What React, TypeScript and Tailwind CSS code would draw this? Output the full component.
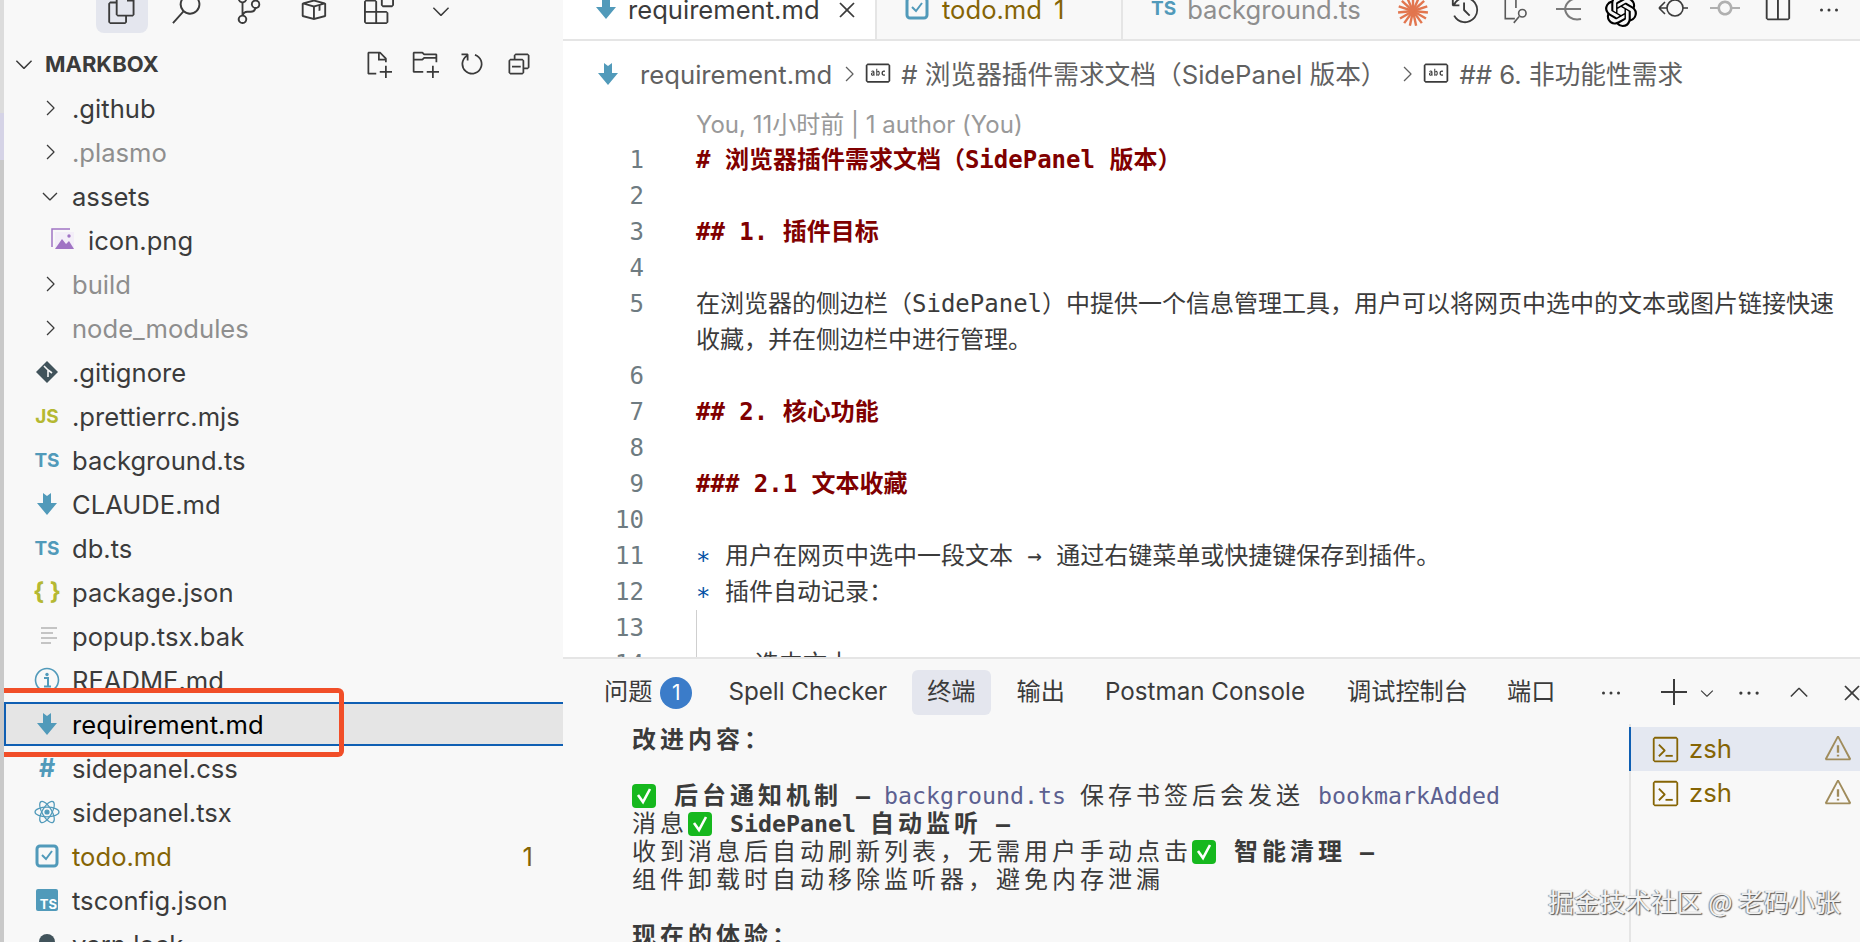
import type { ReactNode } from 'react';
import { SiOpenai } from 'react-icons/si';
import {
    VscAdd, VscChevronDown, VscChevronRight, VscChevronUp, VscClose, VscCollapseAll, VscEllipsis, VscExtensions, VscFiles,
    VscGitCommit, VscHistory, VscNewFile, VscNewFolder, VscPackage, VscRefresh, VscSearch, VscSourceControl,
    VscSplitHorizontal, VscSymbolString, VscTerminal, VscWarning,
} from 'react-icons/vsc';

const MdIcon = ({ size = 24 }: { size?: number }): JSX.Element => (
    <svg width={size} height={size} viewBox="0 0 24 24" fill="#519aba">
        <path d="M8 1 L12 4 L16 1 V11 H22 L12 23 L2 11 H8 Z" />
    </svg>
);

const GitIcon = (): JSX.Element => (
    <svg width="24" height="24" viewBox="0 0 24 24">
        <path d="M12 1 L23 12 L12 23 L1 12 Z" fill="#41535b" />
        <path d="M9 6 L13 10 V17 M13 10 L17 13" stroke="#f8f8f8" strokeWidth="1.6" fill="none" />
    </svg>
);

const ImageIcon = (): JSX.Element => (
    <svg width="26" height="26" viewBox="0 0 26 26" fill="none">
        <path d="M2 20 V2 H20" stroke="#a074c4" strokeWidth="1.5" />
        <rect x="5" y="5" width="19" height="17" fill="#f3eef8" />
        <path d="M5 22 L12 12 L16 17 L19 14 L24 22 Z" fill="#a074c4" />
        <circle cx="19" cy="9" r="1.7" fill="#a074c4" />
    </svg>
);

const LinesIcon = (): JSX.Element => (
    <svg width="24" height="24" viewBox="0 0 24 24" stroke="#c4c4c4" strokeWidth="2">
        <path d="M6 4 H22 M6 9 H18 M6 14 H22 M6 19 H16" />
    </svg>
);

const InfoIcon = (): JSX.Element => (
    <svg width="26" height="26" viewBox="0 0 26 26" fill="none">
        <circle cx="13" cy="13" r="11.5" stroke="#519aba" strokeWidth="1.6" />
        <circle cx="13" cy="7.5" r="1.7" fill="#519aba" />
        <path d="M10 11 H14 V19 M10 19.5 H17" stroke="#519aba" strokeWidth="2" />
    </svg>
);

const AtomIcon = (): JSX.Element => (
    <svg width="26" height="26" viewBox="0 0 26 26" fill="none" stroke="#519aba" strokeWidth="1.2">
        <ellipse cx="13" cy="13" rx="12" ry="4.8" />
        <ellipse cx="13" cy="13" rx="12" ry="4.8" transform="rotate(60 13 13)" />
        <ellipse cx="13" cy="13" rx="12" ry="4.8" transform="rotate(120 13 13)" />
        <circle cx="13" cy="13" r="2" fill="#519aba" />
    </svg>
);

const TodoIcon = ({ size = 24 }: { size?: number }): JSX.Element => (
    <svg width={size} height={size} viewBox="0 0 24 24" fill="none">
        <rect x="2" y="2" width="20" height="20" rx="3" stroke="#519aba" strokeWidth="3" />
        <path d="M7 11 L11 15 L17 7" stroke="#519aba" strokeWidth="2" />
    </svg>
);

const TsText = ({ cls = '' }: { cls?: string }): JSX.Element => (
    <span className={`font-bold text-[19px] leading-none text-[#519aba] ${cls}`}>TS</span>
);

const Check = (): JSX.Element => (
    <svg width="24" height="26" viewBox="0 0 24 26" className="inline-block align-[-5px] mr-1">
        <rect x="0" y="1" width="24" height="24" rx="4" fill="#16b81e" />
        <path d="M6 12 L11 19 L18 6" stroke="#fff" strokeWidth="2.6" fill="none" />
    </svg>
);

type Row = { name: string; icon?: ReactNode; kind?: 'open' | 'closed'; dim?: boolean; indent?: boolean; cls?: string; badge?: string; active?: boolean };

const rows: Row[] = [
    { name: '.github', kind: 'closed' },
    { name: '.plasmo', kind: 'closed', dim: true },
    { name: 'assets', kind: 'open' },
    { name: 'icon.png', icon: <ImageIcon />, indent: true },
    { name: 'build', kind: 'closed', dim: true },
    { name: 'node_modules', kind: 'closed', dim: true },
    { name: '.gitignore', icon: <GitIcon /> },
    { name: '.prettierrc.mjs', icon: <span className="font-bold text-[19px] leading-none text-[#b5b832]">JS</span> },
    { name: 'background.ts', icon: <TsText /> },
    { name: 'CLAUDE.md', icon: <MdIcon /> },
    { name: 'db.ts', icon: <TsText /> },
    { name: 'package.json', icon: <span className="font-bold text-[24px] leading-none text-[#b5b832]">{'{ }'}</span> },
    { name: 'popup.tsx.bak', icon: <LinesIcon /> },
    { name: 'README.md', icon: <InfoIcon /> },
    { name: 'requirement.md', icon: <MdIcon />, active: true },
    { name: 'sidepanel.css', icon: <span className="font-bold text-[25px] leading-none text-[#519aba]">#</span> },
    { name: 'sidepanel.tsx', icon: <AtomIcon /> },
    { name: 'todo.md', icon: <TodoIcon />, cls: 'text-[#856404]', badge: '1' },
    { name: 'tsconfig.json', icon: <span className="flex w-[22px] h-[22px] items-end justify-end bg-[#519aba] rounded-[2px] pr-px text-[13px] font-bold leading-[14px] text-white">TS</span> },
    { name: 'yarn.lock', icon: <span className="block w-[16px] h-[20px] rounded-full bg-[#41535b]" /> },
];

const FileRow = ({ row }: { row: Row }): JSX.Element => (
    <div className={`relative flex h-[44px] shrink-0 items-center text-[25.6px] ${row.indent ? 'pl-[44px]' : 'pl-[28px]'} ${row.active ? 'border-2 border-r-0 border-[#0f5fb3] bg-[#e5e5e5] text-black' : ''} ${row.dim ? 'text-[#8e8e8e]' : row.active ? '' : 'text-[#3b3b3b]'} ${row.cls ?? ''}`}>
        <span className={`flex w-[30px] shrink-0 items-center justify-center ${row.active ? '-ml-[2px]' : ''}`}>
            {row.kind === 'closed' && <VscChevronRight size={26} className="ml-[6px] text-[#3b3b3b]" />}
            {row.kind === 'open' && <VscChevronDown size={26} className="ml-[6px] text-[#3b3b3b]" />}
            {row.icon}
        </span>
        <span className="ml-[10px] pt-[2px]">{row.name}</span>
        {row.badge && <span className="ml-auto mr-[30px] pt-[2px]">{row.badge}</span>}
        {row.active && <div className="absolute -left-[6px] -top-[16px] -bottom-[13px] w-[344px] border-[5px] border-l-0 border-[#f14e28] rounded-r-md" />}
    </div>
);

const Sidebar = (): JSX.Element => (
    <aside className="flex w-[559px] shrink-0 flex-col overflow-hidden bg-[#f8f8f8]">
        <div className="flex h-[33px] shrink-0 items-start pl-[92px] text-[#3b3b3b]">
            <span className="flex h-[33px] w-[52px] items-start justify-center rounded-b-lg bg-[#e4e6ee]"><VscFiles size={30} className="-mt-[6px]" /></span>
            <span className="ml-[12px] w-[52px]"><VscSearch size={30} className="-mt-[6px] ml-[11px]" /></span>
            <span className="w-[64px]"><VscSourceControl size={30} className="-mt-[6px] ml-[22px]" /></span>
            <span className="w-[66px]"><VscPackage size={30} className="-mt-[6px] ml-[22px]" /></span>
            <span className="w-[64px]"><VscExtensions size={30} className="-mt-[6px] ml-[22px]" /></span>
            <span className="w-[64px]"><VscChevronDown size={26} className="-mt-[2px] ml-[22px]" /></span>
        </div>
        <div className="flex h-[53px] shrink-0 items-center pt-[9px] text-[#3b3b3b]">
            <VscChevronDown size={26} className="ml-[7px]" />
            <span className="ml-[8px] text-[22px] font-bold">MARKBOX</span>
            <div className="ml-auto mr-[30px] flex gap-[19px]">
                <VscNewFile size={28} />
                <VscNewFolder size={28} />
                <VscRefresh size={28} />
                <VscCollapseAll size={28} />
            </div>
        </div>
        {rows.map((row) => <FileRow key={row.name} row={row} />)}
    </aside>
);

const Claude = (): JSX.Element => (
    <svg width="34" height="34" viewBox="0 0 34 34" stroke="#e2764f" strokeWidth="2.4">
        {[0, 24, 48, 72, 96, 120, 144, 168, 192, 216, 240, 264, 288, 312, 336].map((a) => (
            <line key={a} x1="17" y1="17" x2="17" y2="2" transform={`rotate(${a} 17 17)`} />
        ))}
    </svg>
);

const TabBar = (): JSX.Element => (
    <div className="flex h-[41px] shrink-0 overflow-hidden border-b-2 border-[#e5e5e5] bg-[#f8f8f8] text-[25.6px]">
        <div className="-mb-[2px] flex w-[312px] items-start bg-white pl-[31px] text-[#3b3b3b] z-10">
            <span className="-mt-[4px]"><MdIcon /></span>
            <span className="ml-[10px] -mt-[9px]">requirement.md</span>
            <VscClose size={28} className="ml-[13px] -mt-[4px]" />
        </div>
        <div className="flex w-[246px] items-start border-l-2 border-[#e5e5e5] pl-[28px] text-[#856404]">
            <span className="-mt-[4px]"><TodoIcon /></span>
            <span className="ml-[13px] -mt-[9px]">todo.md</span>
            <span className="ml-[12px] -mt-[9px]">1</span>
        </div>
        <div className="flex flex-1 items-start border-l-2 border-[#e5e5e5] pl-[28px] text-[#8e8e8e]">
            <TsText cls="-mt-[1px]" />
            <span className="ml-[11px] -mt-[9px]">background.ts</span>
        </div>
        <div className="flex items-start pr-[5px] text-[#3b3b3b]">
            <span className="flex w-[52px] justify-center -mt-[6px]"><Claude /></span>
            <span className="flex w-[52px] justify-center -mt-[5px]"><VscHistory size={30} /></span>
            <span className="flex w-[52px] justify-center -mt-[7px]">
                <svg width="32" height="32" viewBox="0 0 30 30" fill="none" stroke="#5a5a5a" strokeWidth="1.5"><path d="M13 24 H4 V2 H14 V14" /><circle cx="20" cy="19" r="3.5" /><path d="M17 22 L12 28" /></svg>
            </span>
            <span className="flex w-[52px] justify-center -mt-[5px]">
                <svg width="30" height="30" viewBox="0 0 30 30" fill="none" stroke="#7a7a7a" strokeWidth="2"><path d="M27 4 C18 2 12 7 11 14 C12 21 18 26 27 24 M2 14 H27 M2 14 L7 14" /></svg>
            </span>
            <span className="flex w-[52px] justify-center -mt-[5px] text-black"><SiOpenai size={32} /></span>
            <span className="flex w-[52px] justify-center mt-[-4px]">
                <svg width="32" height="28" viewBox="0 0 32 28" fill="none" stroke="#3b3b3b" strokeWidth="1.6"><circle cx="18" cy="12" r="8" /><path d="M2 12 H10 M2 12 L8 6 M2 12 L8 18 M26 12 H31" /></svg>
            </span>
            <span className="flex w-[52px] justify-center -mt-[7px] text-[#b0b0b0]"><VscGitCommit size={30} className="rotate-90" /></span>
            <span className="flex w-[52px] justify-center -mt-[6px] text-[#3b3b3b]"><VscSplitHorizontal size={30} /></span>
            <span className="flex w-[52px] justify-center -mt-[2px]"><VscEllipsis size={24} /></span>
        </div>
    </div>
);

const Breadcrumb = (): JSX.Element => (
    <div className="flex h-[66px] shrink-0 items-center pl-[33px] text-[25.7px] text-[#616161]">
        <MdIcon />
        <span className="ml-[20px] pt-[2px]">requirement.md</span>
        <VscChevronRight size={24} className="ml-[5px]" />
        <VscSymbolString size={28} className="ml-[3px] text-[#3b3b3b]" />
        <span className="ml-[9px] pt-[2px]"># 浏览器插件需求文档（SidePanel 版本）</span>
        <VscChevronRight size={24} className="ml-[8px]" />
        <VscSymbolString size={28} className="ml-[3px] text-[#3b3b3b]" />
        <span className="ml-[10px] pt-[2px]">## 6. 非功能性需求</span>
    </div>
);

const H = ({ children }: { children: ReactNode }): JSX.Element => <span className="font-bold text-[#800000]">{children}</span>;
const Star = (): JSX.Element => <span className="text-[#0451a5]">∗</span>;

const codeLines: { n?: number; body?: ReactNode }[] = [
    { n: 1, body: <H># 浏览器插件需求文档（SidePanel 版本）</H> },
    { n: 2 },
    { n: 3, body: <H>## 1. 插件目标</H> },
    { n: 4 },
    { n: 5, body: '在浏览器的侧边栏（SidePanel）中提供一个信息管理工具，用户可以将网页中选中的文本或图片链接快速' },
    { body: '收藏，并在侧边栏中进行管理。' },
    { n: 6 },
    { n: 7, body: <H>## 2. 核心功能</H> },
    { n: 8 },
    { n: 9, body: <H>### 2.1 文本收藏</H> },
    { n: 10 },
    { n: 11, body: <><Star /> 用户在网页中选中一段文本 → 通过右键菜单或快捷键保存到插件。</> },
    { n: 12, body: <><Star /> 插件自动记录：</> },
    { n: 13, body: <span className="block h-[36px] border-l border-[#cfcfcf]" /> },
    { n: 14, body: <span className="block h-[36px] border-l border-[#cfcfcf] pl-[58px]">选中文本</span> },
];

const Editor = (): JSX.Element => (
    <div className="h-[550px] shrink-0 overflow-hidden bg-white">
        <div className="h-[35px] whitespace-nowrap pl-[133px] text-[24px] leading-[35px] text-[#999999]">You, 11小时前 | 1 author (You)</div>
        <div className="font-['DejaVu_Sans_Mono','Noto_Sans_CJK_SC',monospace] text-[24px] leading-[36px] text-[#3b3b3b]">
            {codeLines.map((line, i) => (
                <div key={i} className="flex h-[36px]">
                    <span className="w-[81px] shrink-0 text-right text-[#6e7b81]">{line.n}</span>
                    <span className="ml-[52px] flex-1 whitespace-pre">{line.body}</span>
                </div>
            ))}
        </div>
    </div>
);

const Z = ({ children, b }: { children: ReactNode; b?: boolean }): JSX.Element => (
    <span className={`font-['Noto_Sans_CJK_SC',sans-serif] text-[24px] tracking-[4px] ${b ? 'font-bold' : ''}`}>{children}</span>
);
const L = ({ children, b, link }: { children: ReactNode; b?: boolean; link?: boolean }): JSX.Element => (
    <span className={`text-[23.25px] ${b ? 'font-bold' : ''} ${link ? 'text-[#5c6090]' : ''}`}>{children}</span>
);

const tabCls = 'shrink-0 whitespace-nowrap text-[24.2px] text-[#3b3b3b]';

const Panel = (): JSX.Element => (
    <div className="relative flex flex-1 flex-col overflow-hidden border-t-2 border-[#e5e5e5] bg-[#f8f8f8]">
        <div className="flex h-[65px] shrink-0 items-center pt-[2px] pl-[41px]">
            <span className={tabCls}>问题</span>
            <span className="ml-[8px] flex h-[32px] w-[32px] shrink-0 items-center justify-center rounded-full bg-[#3b7cc9] text-[21px] text-white">1</span>
            <span className={`${tabCls} ml-[36px]`}>Spell Checker</span>
            <span className={`${tabCls} ml-[25px] rounded-md bg-[#e4e6ee] px-[15px] py-[4px]`}>终端</span>
            <span className={`${tabCls} ml-[26px]`}>输出</span>
            <span className={`${tabCls} ml-[40px]`}>Postman Console</span>
            <span className={`${tabCls} ml-[42px]`}>调试控制台</span>
            <span className={`${tabCls} ml-[39px]`}>端口</span>
            <VscEllipsis size={24} className="ml-[44px] shrink-0 text-[#3b3b3b]" />
            <VscAdd size={32} className="ml-[36px] shrink-0 text-[#3b3b3b]" />
            <VscChevronDown size={20} className="ml-[6px] shrink-0 text-[#3b3b3b]" />
            <VscEllipsis size={26} className="ml-[19px] shrink-0 text-[#3b3b3b]" />
            <VscChevronUp size={28} className="ml-[23px] shrink-0 text-[#3b3b3b]" />
            <VscClose size={28} className="ml-[25px] shrink-0 text-[#3b3b3b]" />
        </div>
        <div className="flex flex-1 overflow-hidden">
            <div className="flex-1 whitespace-pre pl-[69px] font-['DejaVu_Sans_Mono','Noto_Sans_CJK_SC',monospace] leading-[28px] text-[#3b3b3b]">
                <div className="h-[28px]"><Z b>改进内容：</Z></div>
                <div className="h-[28px]" />
                <div className="h-[28px]"><Check /><L> </L><Z b>后台通知机制</Z><L b> – </L><L link>background.ts</L><L> </L><Z>保存书签后会发送</Z><L> </L><L link>bookmarkAdded</L></div>
                <div className="h-[28px]"><Z>消息</Z><Check /><L> </L><L b>SidePanel </L><Z b>自动监听</Z><L b> –</L></div>
                <div className="h-[28px]"><Z>收到消息后自动刷新列表，无需用户手动点击</Z><Check /><L> </L><Z b>智能清理</Z><L b> –</L></div>
                <div className="h-[28px]"><Z>组件卸载时自动移除监听器，避免内存泄漏</Z></div>
                <div className="h-[28px]" />
                <div className="h-[28px]"><Z b>现在的体验：</Z></div>
            </div>
            <div className="w-[231px] shrink-0 border-l-2 border-[#e5e5e5] pt-[3px] text-[25.6px] text-[#856404]">
                {[true, false].map((sel, i) => (
                    <div key={i} className={`-ml-[2px] flex h-[44px] items-center ${sel ? 'border-l-2 border-[#0f5fb3] bg-[#e4e8f1] pl-[20px]' : 'pl-[22px]'}`}>
                        <VscTerminal size={29} />
                        <span className="ml-[9px]">zsh</span>
                        <VscWarning size={30} className="ml-auto mr-[7px] text-[#a08c5c]" />
                    </div>
                ))}
            </div>
        </div>
        <div className="absolute bottom-[27px] right-[19px] whitespace-pre font-['Noto_Sans_CJK_SC',sans-serif] text-[25.7px] leading-[28px] text-[#f2f2f2] [text-shadow:1px_1px_1px_#555,-1px_0_1px_#888]">掘金技术社区 @ 老码小张</div>
    </div>
);

const App = (): JSX.Element => (
    <div className="flex h-[942px] w-[1860px] overflow-hidden bg-white font-['Inter','Noto_Sans_CJK_SC',sans-serif]">
        <div className="flex w-[4px] shrink-0 flex-col bg-[#c9c9c9]">
            <div className="h-[113px] bg-[#dcdcdc]" />
            <div className="h-[47px] bg-[#d5d3e6]" />
        </div>
        <Sidebar />
        <main className="flex min-w-0 flex-1 flex-col">
            <TabBar />
            <Breadcrumb />
            <Editor />
            <Panel />
        </main>
    </div>
);

export default App;
